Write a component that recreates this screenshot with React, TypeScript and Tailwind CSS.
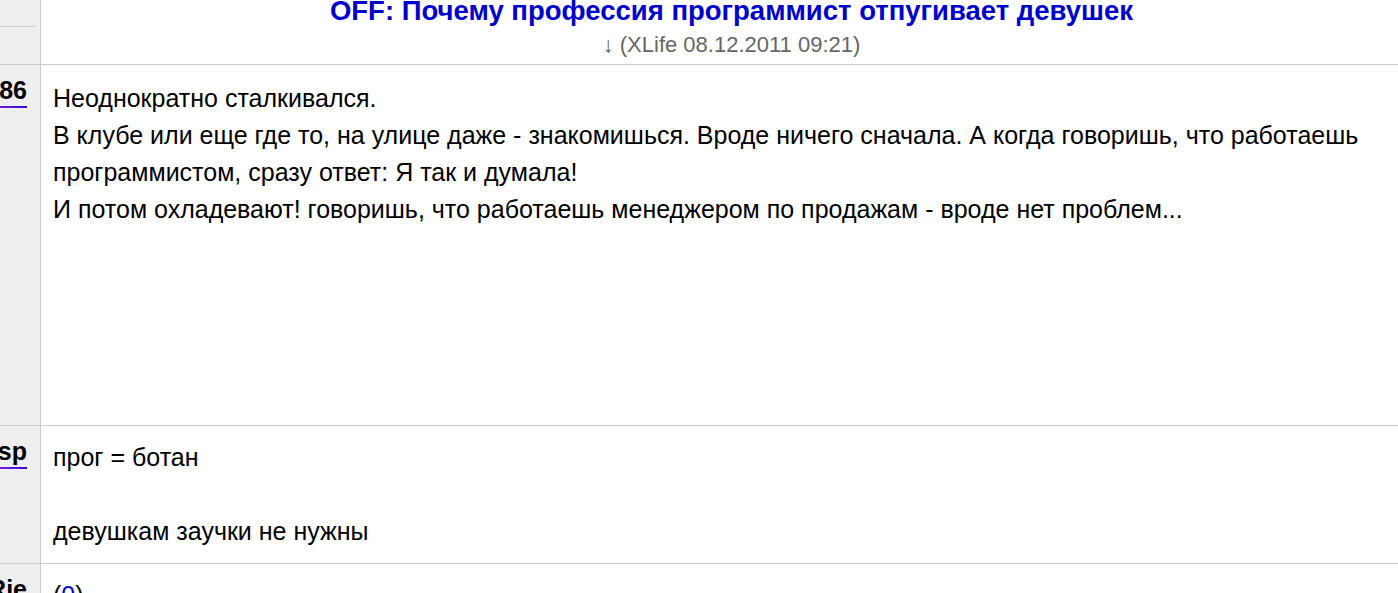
const posts = [
  {
    nick: "86",
    height: "h-[361px]",
    lines: [
      "Неоднократно сталкивался.",
      "В клубе или еще где то, на улице даже - знакомишься. Вроде ничего сначала. А когда говоришь, что работаешь программистом, сразу ответ: Я так и думала!",
      "И потом охладевают! говоришь, что работаешь менеджером по продажам - вроде нет проблем...",
    ],
  },
  {
    nick: "sp",
    height: "h-[138px]",
    lines: ["прог = ботан", "", "девушкам заучки не нужны"],
  },
];

function Nick({ name, line = true }: { name: string; line?: boolean }) {
  return (
    <div className="flex justify-end pr-[13px] pt-[13px]">
      <span className="relative whitespace-nowrap text-[25px] font-bold leading-[25px] text-black">
        {name}
        {line && (
          <span className="absolute left-[-20px] right-0 bottom-[-5px] h-[2px] bg-gradient-to-r from-[#9900cc] to-[#3300dd]" />
        )}
      </span>
    </div>
  );
}

export default function App() {
  return (
    <div className="w-[1398px] h-[593px] overflow-hidden bg-white font-['Liberation_Sans',Arial,sans-serif]">
      <div className="w-[1422px]">
        {/* header */}
        <div className="flex h-[65px] border-b border-[#cccccc]">
          <div className="w-[41px] shrink-0 bg-[#eeeeee] border-r border-[#cccccc]">
            <div className="h-[27px] w-[36px] border-b border-[#cccccc]" />
          </div>
          <div className="flex-1 text-center">
            <div className="-mt-[3px] text-[27.5px] font-bold leading-[28px] text-[#0000cc]">
              OFF: Почему профессия программист отпугивает девушек
            </div>
            <div className="mt-[8px] text-[22px] leading-[24px] text-[#666666]">
              ↓ (XLife 08.12.2011 09:21)
            </div>
          </div>
        </div>

        {posts.map((p, idx) => (
          <div key={p.nick} className={`flex border-b border-[#cccccc] ${p.height}`}>
            <div className="w-[41px] shrink-0 overflow-hidden bg-[#eeeeee] border-r border-[#cccccc]">
              <Nick name={p.nick} />
            </div>
            <div
              className={`flex-1 pl-[12px] text-[25px] leading-[37px] text-black ${
                idx === 0 ? "pt-[15px]" : "pt-[13px]"
              }`}
            >
              {p.lines.map((l, i) => (
                <div key={i} className="min-h-[37px]">
                  {l}
                </div>
              ))}
            </div>
          </div>
        ))}

        <div className="flex h-[60px]">
          <div className="w-[41px] shrink-0 overflow-hidden bg-[#eeeeee] border-r border-[#cccccc]">
            <Nick name="Rie" line={false} />
          </div>
          <div className="flex-1 pl-[12px] pt-[13px] text-[25px] leading-[37px] text-black">
            (<span className="text-[#0000cc]">0</span>)
          </div>
        </div>
      </div>
    </div>
  );
}
